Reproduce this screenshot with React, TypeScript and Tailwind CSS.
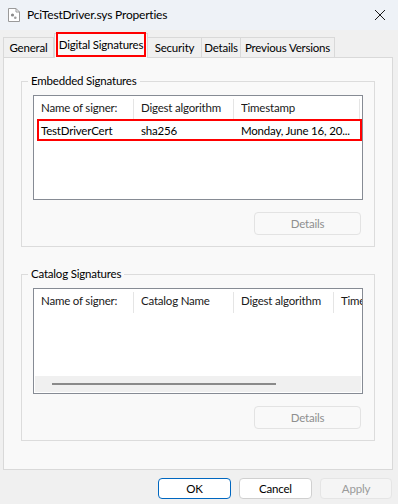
import React from "react";

const font = { fontFamily: '"Segoe UI", Lato, "Liberation Sans", sans-serif' };

const FileIcon = () => (
  <svg width="12" height="14" viewBox="0 0 12 14">
    <path d="M0.5 0.5 H8 L11.5 4 V13.5 H0.5 Z" fill="#fff" stroke="#9a9a9a" />
    <path d="M8 0.5 V4 H11.5" fill="none" stroke="#9a9a9a" />
    <circle cx="4.5" cy="7" r="1.6" fill="#8a8a8a" />
    <circle cx="7.3" cy="9.8" r="1.3" fill="#a0a0a0" />
  </svg>
);

const CloseIcon = () => (
  <svg width="12" height="12" viewBox="0 0 12 12">
    <path d="M1 1 L11 11 M11 1 L1 11" stroke="#1a1a1a" strokeWidth="1" />
  </svg>
);

const Tab = ({ label, width, selected }: { label: string; width: number; selected?: boolean }) =>
  selected ? (
    <div
      className="relative z-10 -mb-px flex h-[25px] shrink-0 items-center justify-center border border-b-0 border-[#d9d9d9] bg-[#f9f9f9] pb-[3px] text-black"
      style={{ width }}
    >
      {label}
      <div className="absolute left-[1px] -top-[2px] h-[25px] w-[90px] border-2 border-[#f00]" />
    </div>
  ) : (
    <div
      className="-ml-px flex h-[20px] shrink-0 items-center justify-center border border-b-0 border-[#d9d9d9] bg-[#f0f0f0] text-black"
      style={{ width }}
    >
      {label}
    </div>
  );

const HeaderCell = ({ label, width }: { label: string; width: number }) => (
  <div
    className="flex h-full shrink-0 items-center overflow-hidden whitespace-nowrap pl-[7px]"
    style={{ width }}
  >
    <span className="flex-1 overflow-hidden">{label}</span>
    <div className="mt-[3px] h-[22px] w-px shrink-0 bg-[#e5e5e5]" />
  </div>
);

const DetailsButton = () => (
  <div className="flex justify-end">
    <div className="flex h-[23px] w-[107px] items-center justify-center rounded-[4px] border border-[#e3e3e3] bg-[#f9f9f9] text-[#8f8f8f]">
      Details
    </div>
  </div>
);

const Group = ({ title, children }: { title: string; children: React.ReactNode }) => (
  <div className="relative border border-[#dcdcdc] pb-[11px] pl-[11px] pr-[13px] pt-[13px]">
    <span className="absolute -top-[9px] left-[6px] bg-[#f9f9f9] px-[3px] leading-[16px] text-black">
      {title}
    </span>
    {children}
  </div>
);

export default function App() {
  return (
    <div
      className="relative h-[504px] w-[398px] overflow-hidden bg-[#f0f0f0] text-[11.5px] tracking-[-0.2px] text-black"
      style={font}
    >
      {/* title bar */}
      <div className="flex h-[30px] items-center bg-[#eef2f7]">
        <div className="ml-[8px] mr-[7px] flex">
          <FileIcon />
        </div>
        <span className="text-[12px]">PciTestDriver.sys Properties</span>
        <div className="ml-auto mr-[8px] flex h-[20px] w-[20px] items-center justify-center">
          <CloseIcon />
        </div>
      </div>

      {/* tabs */}
      <div className="flex h-[27px] items-end pl-[4px]">
        <Tab label="General" width={51} />
        <Tab label="Digital Signatures" width={94} selected />
        <Tab label="Security" width={55} />
        <Tab label="Details" width={40} />
        <Tab label="Previous Versions" width={95} />
      </div>

      {/* panel */}
      <div className="ml-[3px] h-[413px] w-[390px] border border-[#d9d9d9] bg-[#f9f9f9] px-[17px] pt-[23px]">
        <Group title="Embedded Signatures">
          <div className="relative h-[105px] w-[330px] border border-[#868b94] bg-white">
            <div className="flex h-[24px] text-[#1a1a1a]">
              <HeaderCell label="Name of signer:" width={100} />
              <HeaderCell label="Digest algorithm" width={100} />
              <HeaderCell label="Timestamp" width={126} />
            </div>
            <div className="flex h-[21px] items-center">
              <div className="w-[100px] pl-[7px]">TestDriverCert</div>
              <div className="w-[100px] pl-[7px]">sha256</div>
              <div className="w-[126px] whitespace-nowrap pl-[7px]">Monday, June 16, 20...</div>
            </div>
            <div className="absolute left-[3px] top-[23px] h-[22px] w-[325px] border-2 border-[#f00]" />
          </div>
          <div className="mt-[12px]">
            <DetailsButton />
          </div>
        </Group>

        <div className="mt-[27px]">
          <Group title="Catalog Signatures">
            <div className="flex h-[106px] w-[330px] flex-col border border-[#868b94] bg-white">
              <div className="flex h-[24px] overflow-hidden text-[#1a1a1a]">
                <HeaderCell label="Name of signer:" width={100} />
                <HeaderCell label="Catalog Name" width={100} />
                <HeaderCell label="Digest algorithm" width={100} />
                <div className="flex h-full items-center overflow-hidden whitespace-nowrap pl-[7px]">Time</div>
              </div>
              <div className="flex-1" />
              <div className="mx-px mb-px flex h-[16px] items-center bg-[#f0f0f0] pl-[17px]">
                <div className="h-[2px] w-[224px] bg-[#8a8a8a]" />
              </div>
            </div>
            <div className="mt-[12px]">
              <DetailsButton />
            </div>
          </Group>
        </div>
      </div>

      {/* buttons */}
      <div className="mt-[8px] flex justify-end gap-[8px] pr-[6px]">
        <div className="flex h-[21px] w-[73px] items-center justify-center rounded-[4px] border border-[#0067c0] bg-white">
          OK
        </div>
        <div className="flex h-[21px] w-[73px] items-center justify-center rounded-[4px] border border-[#d0d0d0] bg-white">
          Cancel
        </div>
        <div className="flex h-[21px] w-[72px] items-center justify-center rounded-[4px] border border-[#e5e5e5] bg-[#f5f5f5] text-[#9a9a9a]">
          Apply
        </div>
      </div>
    </div>
  );
}
